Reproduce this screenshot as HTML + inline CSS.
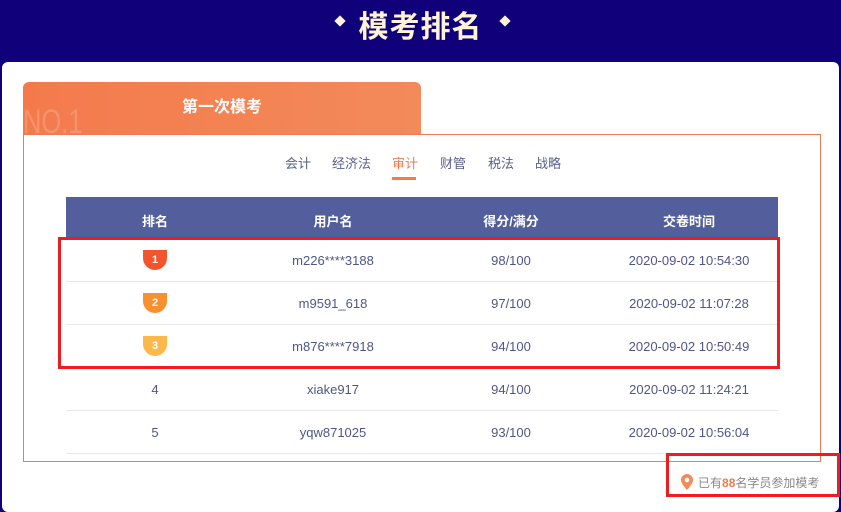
<!DOCTYPE html>
<html><head><meta charset="utf-8"><style>
*{margin:0;padding:0;box-sizing:border-box}
body{width:841px;height:500px;overflow:hidden;background:#10007a;font-family:"Liberation Sans","Noto Sans CJK SC",sans-serif;position:relative}
.abs{position:absolute}
.title{left:0;width:841px;top:2px;text-align:center;color:#fdf3d6;font-size:30px;font-weight:bold;letter-spacing:1px}
.dia{width:8px;height:8px;background:#fdf3d6;transform:rotate(45deg);top:17px}
.card{left:2px;top:62px;width:837px;height:450px;background:#fff;border-radius:6px}
.tabhd{left:23px;top:82px;width:398px;height:53px;background:linear-gradient(90deg,#f47a4c,#f38a5a);border-radius:6px 6px 0 0;color:#fff;font-weight:bold;font-size:16px;text-align:center;line-height:52px;overflow:hidden}
.tabhd span{position:absolute;left:0;top:22px;font-size:34px;color:rgba(255,255,255,.18);font-weight:normal;line-height:36px;transform:scaleX(.75);transform-origin:left}
.box{left:23px;top:134px;width:798px;height:328px;border:1px solid #f07b50}
.tabs{top:153px;font-size:13px;color:#5a5f8a}
.th{left:66px;top:197px;width:712px;height:42px;background:#535f9d;color:#fff;font-size:13px;font-weight:bold}
.c{position:absolute;width:178px;text-align:center;transform:translateX(-89px)}
.row{left:66px;width:712px;height:43px;border-bottom:1px solid #e8e8e8;font-size:13px;color:#4f5687}
.row .c,.th .c{top:14px}
.badge{position:absolute;left:77px;top:11px;width:24px;height:20px;border-radius:0 0 12px 12px;color:#fff;font-size:11px;text-align:center;line-height:20px;font-weight:bold}
.red{border:3px solid #ee1c1c}
</style></head><body>
<div class="abs title">模考排名</div>
<div class="abs dia" style="left:336px"></div>
<div class="abs dia" style="left:501px"></div>
<div class="abs card"></div>
<div class="abs tabhd"><span>NO.1</span>第一次模考</div>
<div class="abs box"></div>
<div class="abs tabs" style="left:285px">会计</div>
<div class="abs tabs" style="left:332px">经济法</div>
<div class="abs tabs" style="left:392px;color:#f47a4c">审计</div>
<div class="abs" style="left:392px;top:177px;width:24px;height:3px;background:#f47a4c"></div>
<div class="abs tabs" style="left:440px">财管</div>
<div class="abs tabs" style="left:488px">税法</div>
<div class="abs tabs" style="left:535px">战略</div>
<div class="abs th"><div class="c" style="left:89px">排名</div><div class="c" style="left:267px">用户名</div><div class="c" style="left:445px">得分/满分</div><div class="c" style="left:623px">交卷时间</div></div>
<div class="abs row" style="top:239px"><div class="badge" style="background:#f4542c">1</div><div class="c" style="left:267px">m226****3188</div><div class="c" style="left:445px">98/100</div><div class="c" style="left:623px">2020-09-02 10:54:30</div></div>
<div class="abs row" style="top:282px"><div class="badge" style="background:#f9902e">2</div><div class="c" style="left:267px">m9591_618</div><div class="c" style="left:445px">97/100</div><div class="c" style="left:623px">2020-09-02 11:07:28</div></div>
<div class="abs row" style="top:325px"><div class="badge" style="background:#fdb84a">3</div><div class="c" style="left:267px">m876****7918</div><div class="c" style="left:445px">94/100</div><div class="c" style="left:623px">2020-09-02 10:50:49</div></div>
<div class="abs row" style="top:368px"><div class="c" style="left:89px">4</div><div class="c" style="left:267px">xiake917</div><div class="c" style="left:445px">94/100</div><div class="c" style="left:623px">2020-09-02 11:24:21</div></div>
<div class="abs row" style="top:411px"><div class="c" style="left:89px">5</div><div class="c" style="left:267px">yqw871025</div><div class="c" style="left:445px">93/100</div><div class="c" style="left:623px">2020-09-02 10:56:04</div></div>
<div class="abs red" style="left:58px;top:237px;width:722px;height:132px"></div>
<div class="abs red" style="left:666px;top:453px;width:174px;height:44px"></div>
<svg class="abs" style="left:681px;top:474px" width="12" height="16" viewBox="0 0 12 16"><path d="M6 0C2.7 0 0 2.6 0 5.8 0 10 6 16 6 16s6-6 6-10.2C12 2.6 9.3 0 6 0z" fill="#f48a5a"/><circle cx="6" cy="6" r="2.3" fill="#fff"/></svg>
<div class="abs" style="left:698px;top:474px;font-size:12px;color:#888">已有<b style="color:#f47a4c">88</b>名学员参加模考</div>
</body></html>
